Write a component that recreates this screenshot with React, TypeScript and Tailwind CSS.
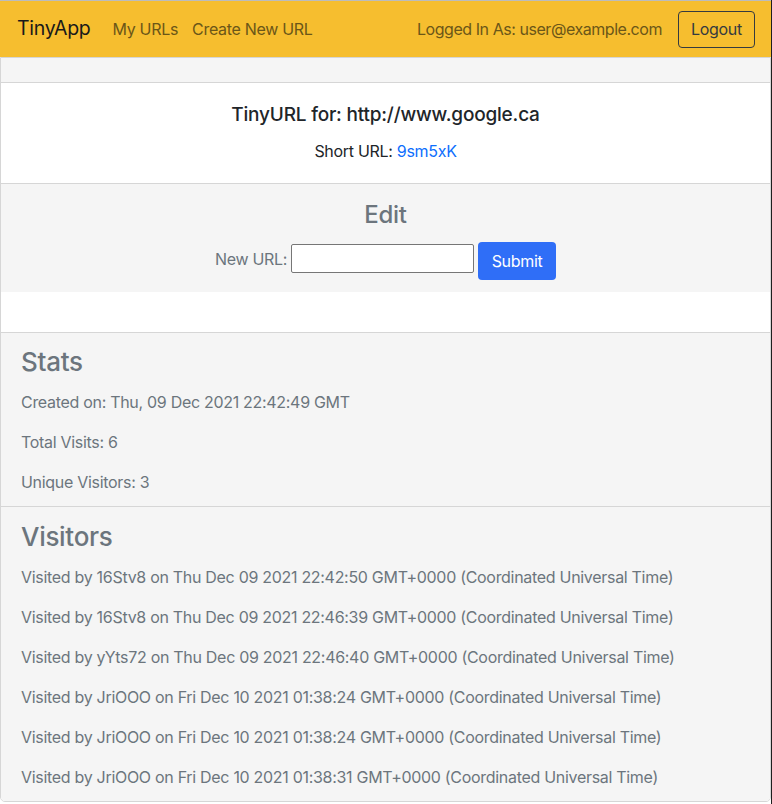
import React from "react";

const visits = [
  "Visited by 16Stv8 on Thu Dec 09 2021 22:42:50 GMT+0000 (Coordinated Universal Time)",
  "Visited by 16Stv8 on Thu Dec 09 2021 22:46:39 GMT+0000 (Coordinated Universal Time)",
  "Visited by yYts72 on Thu Dec 09 2021 22:46:40 GMT+0000 (Coordinated Universal Time)",
  "Visited by JriOOO on Fri Dec 10 2021 01:38:24 GMT+0000 (Coordinated Universal Time)",
  "Visited by JriOOO on Fri Dec 10 2021 01:38:24 GMT+0000 (Coordinated Universal Time)",
  "Visited by JriOOO on Fri Dec 10 2021 01:38:31 GMT+0000 (Coordinated Universal Time)",
];

const App: React.FC = () => {
  return (
    <div className="w-[772px] min-h-[804px] bg-white border-r border-[#1f1f1f] font-['Inter',sans-serif] text-[#212529] tracking-[-0.3px]">
      {/* navbar */}
      <nav className="h-[57px] border-t border-[#bcbcbc] bg-[#f6be2f] flex items-center pl-[17px] pr-[16px]">
        <span className="text-[19.5px] text-[#1a1a1a] mr-[22px]">TinyApp</span>
        <a className="text-[16px] text-[#6b5618] mr-[14px]">My URLs</a>
        <a className="text-[16px] text-[#6b5618]">Create New URL</a>
        <div className="ml-auto flex items-center gap-[16px]">
          <span className="text-[16px] text-[#6b5618] tracking-[-0.45px]">Logged In As: user@example.com</span>
          <button className="h-[37px] w-[77px] border border-[#343a40] rounded-[4px] text-[16px] text-[#343a40]">
            Logout
          </button>
        </div>
      </nav>

      {/* card */}
      <div className="w-[771px] border border-[#d6d6d6] rounded-b-[5px] overflow-hidden">
        <div className="h-[25px] bg-[#f5f5f5] border-b border-[#d6d6d6]" />
        <div className="h-[101px] bg-white border-b border-[#d6d6d6] flex flex-col items-center pt-[21px]">
          <h5 className="text-[19px] font-medium text-[#212529] leading-[22px] tracking-[-0.2px]">
            TinyURL for: http://www.google.ca
          </h5>
          <p className="text-[16px] mt-[15px] leading-[20px]">
            Short URL: <a className="text-[#0d6efd]">9sm5xK</a>
          </p>
        </div>

        <div className="h-[108px] bg-[#f5f5f5] flex flex-col items-center pt-[17px]">
          <h3 className="text-[24px] font-medium text-[#6c757d] leading-[28px]">Edit</h3>
          <form className="flex items-start mt-[13px] text-[#6c757d]">
            <label className="h-[29px] mt-[2px] flex items-center text-[16px] mr-[4px]">New URL:</label>
            <input className="w-[183px] h-[29px] mt-[2px] bg-white border border-[#767676] rounded-[2px] mr-[4px]" />
            <button
              type="button"
              className="h-[38px] w-[78px] bg-[#2f6ef7] rounded-[4px] text-white text-[16px]"
            >
              Submit
            </button>
          </form>
        </div>
        <div className="h-[41px] bg-white border-b border-[#d6d6d6]" />

        <div className="bg-[#f5f5f5] border-b border-[#d6d6d6] px-[20px] pt-[14px] pb-[14px] text-[#6c757d]">
          <h3 className="text-[26px] font-medium leading-[30px]">Stats</h3>
          <div className="flex flex-col gap-[20px] mt-[15px] text-[16px] leading-[20px]">
            <p>Created on: Thu, 09 Dec 2021 22:42:49 GMT</p>
            <p>Total Visits: 6</p>
            <p>Unique Visitors: 3</p>
          </div>
        </div>

        <div className="bg-[#f5f5f5] px-[20px] pt-[15px] pb-[14px] text-[#6c757d]">
          <h3 className="text-[26px] font-medium leading-[30px]">Visitors</h3>
          <div className="flex flex-col gap-[20px] mt-[15px] text-[16px] leading-[20px]">
            {visits.map((v, i) => (
              <p key={i} className="whitespace-nowrap">
                {v}
              </p>
            ))}
          </div>
        </div>
      </div>
    </div>
  );
};

export default App;
